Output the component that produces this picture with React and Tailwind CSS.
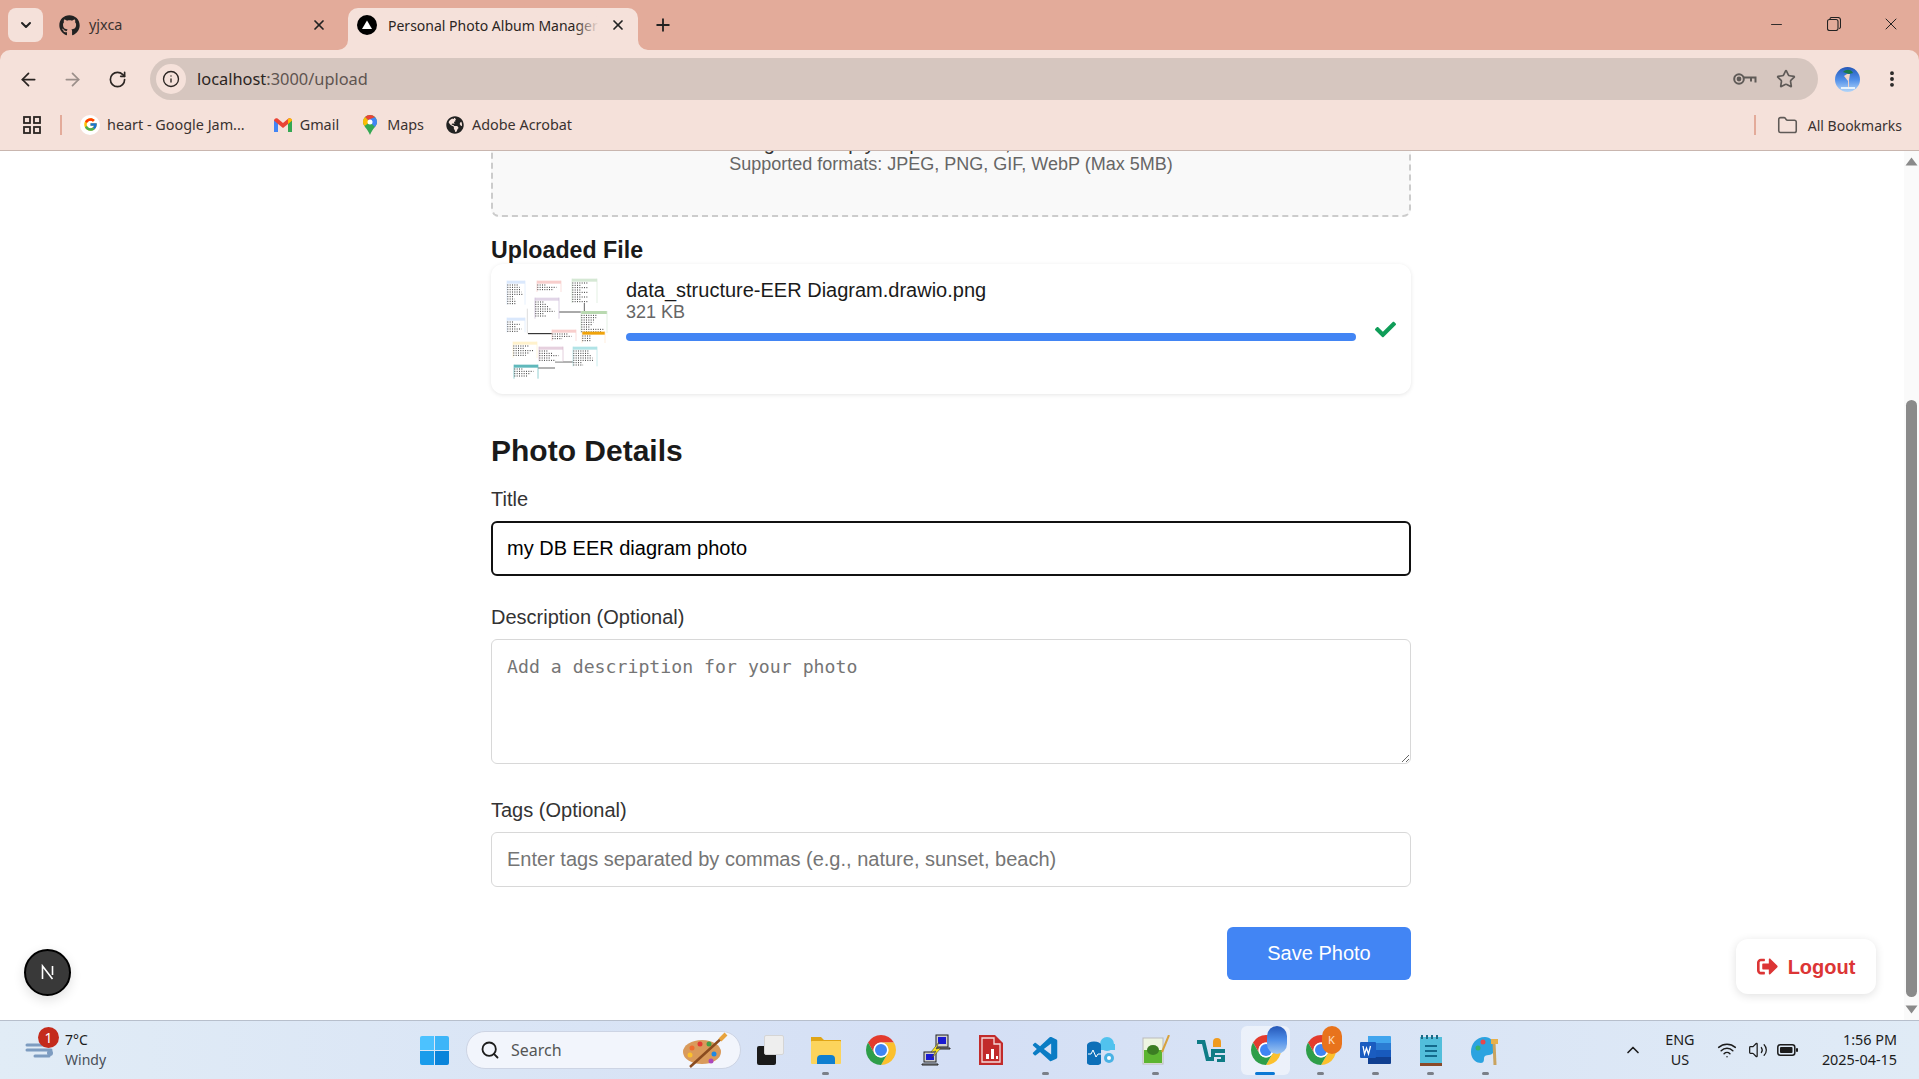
import React from "react";
import { ArrowLeft, ArrowRight, RotateCw, Info, Star, MoreVertical, Folder, X, Plus, Minus, ChevronDown, ChevronUp, Wifi, Volume2, Search } from "lucide-react";
import { FaGithub, FaCheck, FaSignOutAlt, FaGlobeAmericas } from "react-icons/fa";
import { FcGoogle } from "react-icons/fc";
import { VscVscode } from "react-icons/vsc";

const Chrome = ({ size = 30 }) => (
  <svg width={size} height={size} viewBox="4 4 40 40">
    <path d="M6.68 14A20 20 0 0 1 41.32 14H24A10 10 0 0 0 15.34 29Z" fill="#e33b2e" />
    <path d="M41.32 14A20 20 0 0 1 24 44L32.66 29A10 10 0 0 0 24 14Z" fill="#fbc02d" />
    <path d="M24 44A20 20 0 0 1 6.68 14L15.34 29A10 10 0 0 0 32.66 29Z" fill="#2e9e49" />
    <circle cx="24" cy="24" r="10" fill="#fff" />
    <circle cx="24" cy="24" r="8" fill="#3f85f4" />
  </svg>
);

const boxes = [
  [78, 423, 54, 72, "#dae8fc", "#dae8fc"],
  [168, 423, 72, 34, "#f8cecc", "#f8cecc"],
  [273, 417, 75, 73, "#d5e8d4", "#d5e8d4"],
  [162, 474, 72, 63, "#e1d5e7", "#c9b8d6"],
  [300, 514, 78, 66, "#b9d9b0", "#d5e8d4"],
  [78, 534, 54, 44, "#dae8fc", "#dae8fc"],
  [213, 570, 72, 34, "#f8cecc", "#f8cecc"],
  [303, 576, 69, 34, "#f0a30a", "#ffe6cc"],
  [96, 606, 72, 49, "#fff2cc", "#fff2cc"],
  [174, 621, 72, 44, "#e6d0de", "#d6b8cc"],
  [276, 621, 72, 59, "#b0e3e6", "#b0e3e6"],
  [99, 675, 72, 42, "#5fb8bb", "#5fb8bb"],
];

const Thumb = () => (
  <svg width="105" height="105" viewBox="72 412 315 315">
    <path d="M234 517H300" stroke="#555" strokeWidth="3" />
    <path d="M141 582H213" stroke="#111" strokeWidth="3" />
    <path d="M222 667H276M171 685H222M310 490V514" stroke="#666" strokeWidth="3" />
    <path d="M139 507V582" stroke="#ccc" strokeWidth="2" />
    {boxes.map(([x, y, w, h, c, b], i) => {
      const rows = [];
      for (let r = y + 13, k = 0; r < y + h - 2; r += 7, k++) {
        const len = w * (0.35 + (((i + 3) * (k + 5) * 7) % 10) / 18);
        rows.push(<path key={k} d={`M${x + 1} ${r}h${Math.min(len, w - 3)}`} stroke="#000" strokeWidth="2.400" strokeDasharray="3 4" />);
      }
      return (
        <g key={i}>
          <rect x={x} y={y} width={w} height={h} fill="#fff" />
          <rect x={x} y={y} width={w} height="9" fill={c} />
          <path d={`M${x} ${y}V${y + h}M${x + w} ${y}V${y + h}`} stroke={b} strokeWidth="2" />
          {rows}
        </g>
      );
    })}
  </svg>
);

const Bookmark = ({ icon, label, className }) => (
  <div className={"flex items-center gap-[7px] " + className}>
    <span className="flex w-[20px] h-[20px] items-center justify-center">{icon}</span>
    <span className="text-[14.4px] text-[#3a3230] whitespace-nowrap">{label}</span>
  </div>
);

const Slot = ({ children, pill, active }) => (
  <div className="relative flex w-[55px] h-full items-center justify-center">
    {active && <div className="absolute left-[3px] right-[3px] top-[5px] bottom-[4px] rounded-md bg-white/50" />}
    <div className="relative flex items-center justify-center">{children}</div>
    {pill && <div className="absolute left-[24px] bottom-[4px] w-[7px] h-[3px] rounded-full bg-[#7a7f88]" />}
    {active && <div className="absolute left-[17px] bottom-[4px] w-[20px] h-[3px] rounded-full bg-[#0a78d4]" />}
  </div>
);

const inputCls = "block w-full h-[55px] rounded-md bg-white text-[20px] outline-none font-['Liberation_Sans',sans-serif]";

export default function App() {
  return (
    <div className="flex flex-col w-[1919px] h-[1079px] overflow-hidden bg-white font-['Noto_Sans',sans-serif]">
      {/* tab strip */}
      <div className="flex h-[50px] shrink-0 bg-[#e3ab9a] items-end relative">
        <div className="self-start mt-[8px] ml-[8px] flex w-[35px] h-[34px] items-center justify-center rounded-lg bg-[#f5e1da]">
          <ChevronDown size={16} strokeWidth={3} color="#222" />
        </div>
        <div className="flex w-[305px] h-[42px] items-center pl-[16px] pr-[21px] pb-[8px] gap-[9px] text-[14.4px] text-[#3a3230]">
          <FaGithub size={21} color="#222" />
          <span className="flex-1">yjxca</span>
          <X size={16} strokeWidth={2.6} color="#222" />
        </div>
        <div className="relative flex w-[290px] h-[42px] items-center pl-[9px] pr-[12px] pb-[8px] gap-[11px] rounded-t-[10px] bg-[#f5e1da] text-[14px] text-[#2b2522]">
          <svg width="10" height="10" viewBox="0 0 10 10" className="absolute left-[-10px] bottom-0"><path d="M10 0V10H0A10 10 0 0 0 10 0Z" fill="#f5e1da" /></svg>
          <svg width="10" height="10" viewBox="0 0 10 10" className="absolute right-[-10px] bottom-0"><path d="M0 0V10H10A10 10 0 0 1 0 0Z" fill="#f5e1da" /></svg>
          <svg width="20" height="20" viewBox="0 0 20 20" className="shrink-0">
            <circle cx="10" cy="10" r="10" fill="#000" />
            <path d="M10 5.5L15 14H5Z" fill="#fff" />
          </svg>
          <div className="relative w-[212px] overflow-hidden whitespace-nowrap">
            Personal Photo Album Manager
            <div className="absolute right-0 top-0 bottom-0 w-[24px] bg-gradient-to-r from-transparent to-[#f5e1da]" />
          </div>
          <X size={16} strokeWidth={2.6} color="#222" className="shrink-0" />
        </div>
        <div className="flex w-[50px] h-[42px] items-center justify-center pb-[8px]">
          <Plus size={20} strokeWidth={2.2} color="#222" />
        </div>
        <div className="ml-auto self-start flex items-center h-[48px] text-[#222]">
          <Minus size={17} strokeWidth={1.3} className="mr-[42px]" />
          <svg width="14" height="14" viewBox="0 0 14 14" fill="none" stroke="#222" strokeWidth="1.1" className="mr-[40px]">
            <rect x="0.5" y="2.5" width="10.5" height="11" rx="2" />
            <path d="M3 2.5V2a1.5 1.5 0 0 1 1.5-1.5H11A2.5 2.5 0 0 1 13.5 3v7A1.5 1.5 0 0 1 12 11.5" />
          </svg>
          <X size={20} strokeWidth={1.2} className="mr-[18px]" />
        </div>
      </div>
      {/* toolbar */}
      <div className="flex h-[58px] shrink-0 bg-[#e3ab9a]">
        <div className="flex flex-1 rounded-t-[10px] bg-[#f5e1da] pt-[8px] h-[58px]">
          <div className="flex h-[42px] w-full items-center">
            <ArrowLeft size={21} strokeWidth={2} color="#2b2522" className="ml-[18px]" />
            <ArrowRight size={21} strokeWidth={2} color="#9b8f8a" className="ml-[23px]" />
            <RotateCw size={19} strokeWidth={2.1} color="#2b2522" className="ml-[25px]" />
            <div className="flex flex-1 ml-[23px] h-[42px] items-center rounded-full bg-[#d6c6bf] pl-[6px] pr-[22px]">
              <div className="flex w-[30px] h-[30px] items-center justify-center rounded-full bg-[#f5e1da]">
                <Info size={18} strokeWidth={1.8} color="#2b2522" />
              </div>
              <span className="ml-[11px] text-[16.4px] text-[#2b2522]">localhost<span className="text-[#5e5450]">:3000/upload</span></span>
              <svg width="24" height="14" viewBox="0 0 24 14" fill="none" stroke="#5f5a57" strokeWidth="2" className="ml-auto mr-[19px]">
                <circle cx="6" cy="7" r="4.8" />
                <circle cx="6" cy="7" r="1.4" fill="#5f5a57" />
                <path d="M11 5.5H22.5V10.5M18 5.5V9.5" />
              </svg>
              <Star size={20} strokeWidth={2} color="#5f5a57" />
            </div>
            <div className="relative flex w-[25px] h-[25px] ml-[17px] rounded-full overflow-hidden bg-gradient-to-b from-[#2557b8] via-[#4f8ee8] to-[#b5d6f8] justify-center">
              <svg width="25" height="25" viewBox="0 0 25 25">
                <path d="M8 5c3-3 8-3 10 1l-4 1z" fill="#1c7a4a" />
                <path d="M12 7l3 0-1 6 0 7-1 0 0-6-4-5z" fill="#f3d4c6" />
                <path d="M6 20h14v2H6z" fill="#e6f2fd" />
              </svg>
            </div>
            <MoreVertical size={20} strokeWidth={2.6} color="#222" className="ml-[22px] mr-[17px]" />
          </div>
        </div>
      </div>
      {/* bookmarks */}
      <div className="flex h-[43px] shrink-0 items-center pb-[8px] bg-[#f5e1da] border-b border-[#c9b6af]">
        <svg width="18" height="18" viewBox="0 0 18 18" fill="none" stroke="#2b2522" strokeWidth="1.8" className="ml-[23px]">
          <rect x="1" y="1" width="6" height="6" />
          <rect x="11" y="1" width="6" height="6" />
          <rect x="1" y="11" width="6" height="6" />
          <rect x="11" y="11" width="6" height="6" />
        </svg>
        <div className="ml-[19px] w-[2px] h-[20px] bg-[#e3ab9a]" />
        <Bookmark className="ml-[18px]" icon={<span className="flex w-[20px] h-[20px] items-center justify-center rounded-full bg-white"><FcGoogle size={15} /></span>} label="heart - Google Jam..." />
        <Bookmark className="ml-[28px]" icon={
          <svg width="18" height="14" viewBox="0 0 18 14">
            <path d="M0 2.5V14h4V6l5 4 5-4v8h4V2.5C18 .5 15.8-.5 14.4.6L9 5 3.6.6C2.2-.5 0 .5 0 2.5z" fill="#ea4335" />
            <path d="M0 2.5V14h4V6z" fill="#4285f4" />
            <path d="M14 6v8h4V2.5z" fill="#34a853" />
            <path d="M14 .9V6l4-3.5C18 .5 15.5-.3 14 .9z" fill="#fbbc04" />
          </svg>
        } label="Gmail" />
        <Bookmark className="ml-[21px]" icon={
          <svg width="14" height="20" viewBox="0 0 14 20">
            <path d="M7 0a7 7 0 0 1 7 7c0 4-4 6-7 13C4 13 0 11 0 7a7 7 0 0 1 7-7z" fill="#34a853" />
            <path d="M2 2L12 12c1-1.500 2-3 2-5 0-1.500-.5-3-1.500-4.500z" fill="#4285f4" />
            <path d="M7 0a7 7 0 0 0-5 2l3 3 7-3A7 7 0 0 0 7 0z" fill="#ea4335" />
            <path d="M2 2C.7 3.500 0 5 0 7c0 1.500.6 2.800 1.500 4L7 7z" fill="#fbbc04" />
            <circle cx="7" cy="7" r="2.500" fill="#fff" />
          </svg>
        } label="Maps" />
        <Bookmark className="ml-[21px]" icon={<FaGlobeAmericas size={18} color="#222" />} label="Adobe Acrobat" />
        <div className="ml-auto w-[2px] h-[20px] bg-[#e3ab9a]" />
        <Folder size={21} strokeWidth={1.8} color="#5f5a57" className="ml-[21px]" />
        <span className="ml-[10px] mr-[17px] text-[14px] text-[#3a3230] whitespace-nowrap">All Bookmarks</span>
      </div>
      {/* page */}
      <div className="relative flex flex-1 min-h-0 overflow-hidden font-['Liberation_Sans',sans-serif]">
        <div className="flex-1 min-w-0 overflow-hidden pr-[2px]">
          <div className="mx-auto flex w-[920px] flex-col mt-[-40px] text-[#1a1a1a]">
            <div className="flex h-[106px] flex-col items-center rounded-lg border-2 border-dashed border-[#cccccc] bg-[#f9f9f9] pt-[18px]">
              <div className="h-[24px] text-[20px] leading-[24px] text-[#333]">Drag and drop your photo here, or click to browse</div>
              <div className="h-[24px] -mt-[3px] text-[18px] leading-[24px] text-[#666]">Supported formats: JPEG, PNG, GIF, WebP (Max 5MB)</div>
            </div>
            <h3 className="mt-[20px] h-[26px] text-[23.2px] leading-[26px] font-bold text-[#1a1a1a]">Uploaded File</h3>
            <div className="mt-px flex h-[130px] items-center rounded-xl bg-white pl-[14px] pr-[14px] shadow-[0_1px_4px_rgba(0,0,0,0.1)]">
              <div className="w-[105px] h-[105px] shrink-0"><Thumb /></div>
              <div className="ml-[16px] flex-1 min-w-0 self-start pt-[14px]">
                <div className="text-[20px] leading-[24px] text-[#1a1a1a]">data_structure-EER Diagram.drawio.png</div>
                <div className="text-[18px] leading-[20px] text-[#666]">321 KB</div>
                <div className="mt-[11px] h-[8px] rounded-full bg-[#4285f4]" />
              </div>
              <FaCheck size={21} color="#0f9d58" className="ml-[19px] mr-[1px] shrink-0" />
            </div>
            <h2 className="mt-[38px] h-[38px] text-[30px] leading-[38px] font-bold text-[#1a1a1a]">Photo Details</h2>
            <label className="mt-[17px] h-[24px] text-[20px] leading-[24px] text-[#333]">Title</label>
            <input readOnly value="my DB EER diagram photo" className={"mt-[10px] border-2 border-[#111] px-[14px] text-black " + inputCls} />
            <label className="mt-[29px] h-[24px] text-[20px] leading-[24px] text-[#333]">Description (Optional)</label>
            <textarea readOnly placeholder="Add a description for your photo" className="mt-[10px] block w-full h-[125px] rounded-md border border-[#d8d8d8] bg-white px-[15px] pt-[16px] text-[18.2px] leading-[22px] outline-none placeholder:text-[#757575] font-['DejaVu_Sans_Mono',monospace]" />
            <label className="mt-[34px] h-[24px] text-[20px] leading-[24px] text-[#333]">Tags (Optional)</label>
            <input readOnly placeholder="Enter tags separated by commas (e.g., nature, sunset, beach)" className={"mt-[10px] border border-[#d8d8d8] px-[15px] placeholder:text-[#757575] " + inputCls} />
            <button className="mt-[40px] self-end w-[184px] h-[53px] rounded-md bg-[#4285f4] pb-[2px] text-[20px] text-white">Save Photo</button>
          </div>
        </div>
        {/* scrollbar */}
        <div className="flex w-[15px] shrink-0 flex-col items-center bg-[#fafafa] py-[6px]">
          <svg width="13" height="9" viewBox="0 0 13 9"><path d="M6.500 0.500L12.500 8.500H0.500Z" fill="#8a8a8a" /></svg>
          <div className="mt-[234px] w-[11px] flex-1 rounded-full bg-[#8a8a8a]" />
          <svg width="13" height="9" viewBox="0 0 13 9" className="mt-[8px]"><path d="M6.500 8.500L12.500 0.500H0.500Z" fill="#8a8a8a" /></svg>
        </div>
        {/* overlays */}
        <div className="absolute left-[24px] bottom-[24px] flex w-[47px] h-[47px] items-center justify-center rounded-full border-2 border-black bg-[#393939] shadow-[0_4px_12px_rgba(0,0,0,0.12)]">
          <svg width="17" height="17" viewBox="0 0 17 17" fill="none" stroke="#fff" strokeWidth="1.6"><path d="M3.500 15V2L13.500 15M13.500 2V11" /></svg>
        </div>
        <button className="absolute right-[43px] bottom-[26px] flex w-[140px] h-[55px] items-center justify-center gap-[10px] rounded-xl bg-white text-[20px] font-bold text-[#dc3535] shadow-[0_2px_10px_rgba(0,0,0,0.12)]">
          <FaSignOutAlt size={21} /> Logout
        </button>
      </div>
      {/* taskbar */}
      <div className="flex h-[59px] shrink-0 items-center border-t border-[#b7bfcc] bg-gradient-to-r from-[#e1ecf6] via-[#d4dff5] to-[#e0ebf6] font-['Noto_Sans',sans-serif]">
        <div className="relative flex w-[420px] h-full shrink-0 items-center pl-[25px]">
          <svg width="30" height="30" viewBox="0 0 30 30" fill="none" stroke="#7d9cc0" strokeWidth="3" strokeLinecap="round">
            <path d="M2 10H20M2 15H26M10 21H24" />
            <circle cx="25" cy="18" r="3" fill="#7d9cc0" stroke="none" />
          </svg>
          <div className="absolute left-[38px] top-[6px] flex w-[21px] h-[21px] items-center justify-center rounded-full bg-[#c42b1c] text-[14px] leading-none text-white">1</div>
          <div className="ml-[10px] text-[14px] leading-[20px]">
            <div className="text-[#1c1c1c]">7°C</div>
            <div className="text-[#4a4f58]">Windy</div>
          </div>
        </div>
        <div className="grid grid-cols-2 gap-[1px] w-[29px] h-[29px] shrink-0">
          <div className="bg-[#4cc2ff] rounded-tl-[2px]" />
          <div className="bg-[#3db5f8] rounded-tr-[2px]" />
          <div className="bg-[#1a9ceb] rounded-bl-[2px]" />
          <div className="bg-[#0a84da] rounded-br-[2px]" />
        </div>
        <div className="ml-[17px] flex w-[275px] h-[38px] shrink-0 items-center rounded-full bg-[#f2f5fc] border border-[#cdd4e4] pl-[13px] pr-[10px]">
          <Search size={20} strokeWidth={2.2} color="#1c1c1c" />
          <span className="ml-[11px] text-[16px] text-[#555]">Search</span>
          <svg width="50" height="36" viewBox="0 0 46 36" className="ml-auto">
            <ellipse cx="20" cy="20" rx="19" ry="12" fill="#d99a5b" />
            <circle cx="10" cy="16" r="2.500" fill="#ef6c2f" />
            <circle cx="18" cy="12" r="2.500" fill="#e53935" />
            <circle cx="27" cy="12" r="2.500" fill="#43a047" />
            <circle cx="8" cy="23" r="2.500" fill="#fbc02d" />
            <circle cx="32" cy="22" r="2.500" fill="#1e88e5" />
            <circle cx="29" cy="29" r="2.500" fill="#ab47bc" />
            <path d="M8 35L42 4" stroke="#8a4b1f" strokeWidth="2.500" />
            <path d="M38 8L44 2" stroke="#e8a33d" strokeWidth="4" />
          </svg>
        </div>
        <div className="ml-[2px] flex h-full shrink-0">
          <Slot>
            <div className="relative w-[28px] h-[30px]">
              <div className="absolute left-0 bottom-0 w-[19px] h-[19px] rounded-[2px] bg-[#1a1a1a]" />
              <div className="absolute right-[1px] top-0 w-[20px] h-[20px] rounded-[2px] bg-[#eeeeee] border border-[#d5d5d5]" />
            </div>
          </Slot>
          <Slot pill>
            <svg width="30" height="30" viewBox="0 0 30 30">
              <path d="M0 2h10l3 3h17v7H0z" fill="#e0a516" />
              <rect y="6" width="30" height="23" rx="1" fill="#fcd45c" />
              <path d="M6 29v-5q0-4 4-4h10q4 0 4 4v5z" fill="#0f7fd0" />
            </svg>
          </Slot>
          <Slot><Chrome /></Slot>
          <Slot>
            <svg width="30" height="32" viewBox="0 0 30 32">
              <rect x="15" y="1" width="12" height="12" fill="#cfcfcf" stroke="#222" />
              <rect x="17" y="3" width="8" height="7" fill="#1a1ad0" />
              <rect x="3" y="18" width="12" height="10" fill="#cfcfcf" stroke="#222" />
              <rect x="5" y="20" width="8" height="6" fill="#1a1ad0" />
              <path d="M1 30h16v1H1zM14 14h15v1H14z" stroke="#222" fill="#ddd" />
              <path d="M18 8L10 18l5-1-4 7 9-10-5 1z" fill="#ffe81a" stroke="#333" strokeWidth=".5" />
            </svg>
          </Slot>
          <Slot>
            <svg width="24" height="30" viewBox="0 0 24 30">
              <path d="M0 0H16L24 8V30H0z" fill="#c22b2b" />
              <path d="M3 3H15V9H21V27H3z" fill="#c22b2b" stroke="#f4dcdc" strokeWidth="1.300" />
              <path d="M7 24v-5h3v5zM12 24v-10h3v10zM17 24v-3h2v3z" fill="#fff" />
            </svg>
          </Slot>
          <Slot pill><VscVscode size={30} color="#0a7cc4" /></Slot>
          <Slot>
            <svg width="30" height="30" viewBox="0 0 30 30">
              <circle cx="21" cy="9" r="7" fill="#51c2ee" />
              <rect x="14" y="9" width="15" height="6" fill="#51c2ee" />
              <path d="M1 10a6 3 0 0 1 14 0V28a6 2 0 0 1-14 0z" fill="#0d6fb8" />
              <path d="M2 19h3l2-4 3 7 2-3h3" stroke="#fff" fill="none" strokeWidth="1" />
              <circle cx="23" cy="23" r="5" fill="#4ab2e4" />
              <circle cx="23" cy="23" r="2" fill="#fff" />
            </svg>
          </Slot>
          <Slot pill>
            <svg width="28" height="30" viewBox="0 0 28 30">
              <rect x="1" y="3" width="20" height="26" fill="#eef5e2" stroke="#bbb" />
              <rect x="2" y="15" width="18" height="13" fill="#5cb531" />
              <ellipse cx="11" cy="15" rx="6" ry="5" fill="#3b7d23" />
              <path d="M27 0L20 17" stroke="#d8a23c" strokeWidth="2" />
            </svg>
          </Slot>
          <Slot>
            <svg width="30" height="28" viewBox="0 0 30 28">
              <path d="M1 4H9L13 21H18V25H10L6 8H1z" fill="#0e7c86" />
              <path d="M17 6a4 4 0 0 1 8 0V11H17z" fill="#f09b1e" />
              <path d="M15 13H29V17H19V19H29V26H21V23H25V21H15z" fill="#0e7c86" />
            </svg>
          </Slot>
          <Slot active>
            <div className="relative">
              <Chrome />
              <div className="absolute right-[-6px] top-[-9px] w-[20px] h-[28px] rounded-full bg-gradient-to-b from-[#2557b8] via-[#4f8ee8] to-[#9fc6f0]" />
            </div>
          </Slot>
          <Slot pill>
            <div className="relative">
              <Chrome />
              <div className="absolute right-[-6px] top-[-9px] flex w-[20px] h-[28px] items-center justify-center rounded-full bg-[#e8731c] text-[11px] text-[#ffe0c4]">K</div>
            </div>
          </Slot>
          <Slot pill>
            <svg width="32" height="30" viewBox="0 0 32 30">
              <path d="M8 1H30a1 1 0 0 1 1 1V8H8z" fill="#41a5ee" />
              <rect x="8" y="8" width="23" height="7" fill="#2b7cd3" />
              <rect x="8" y="15" width="23" height="7" fill="#185abd" />
              <path d="M8 22H31V28a1 1 0 0 1-1 1H8z" fill="#103f91" />
              <rect x="0" y="7" width="16" height="16" rx="1" fill="#1a5cc0" />
              <path d="M3 11l1.500 8 2-6 2 6 2-8" stroke="#fff" fill="none" strokeWidth="1.300" />
            </svg>
          </Slot>
          <Slot pill>
            <svg width="24" height="31" viewBox="0 0 24 31">
              <rect x="1" y="2" width="22" height="27" fill="#52bedb" />
              <rect x="1" y="28" width="22" height="3" fill="#8a4a2a" />
              <path d="M3 0v4M8 0v4M13 0v4M18 0v4" stroke="#1c6a86" strokeWidth="2" />
              <path d="M6 11H18M6 16H18M6 21H18" stroke="#136a8c" strokeWidth="2" />
            </svg>
          </Slot>
          <Slot pill>
            <svg width="32" height="32" viewBox="0 0 32 32">
              <path d="M15 3C6 3 1 10 1 18s6 11 10 11c3 0 3-3 3-5s2-3 5-3 6-3 6-8-5-10-10-10z" fill="#2ba3e0" />
              <circle cx="8" cy="14" r="2.500" fill="#36b36a" />
              <circle cx="13" cy="8" r="2.500" fill="#e5484d" />
              <path d="M24 8L25 31" stroke="#c9a35f" strokeWidth="3" />
              <path d="M21 5h7v5h-7z" fill="#e8b04a" />
            </svg>
          </Slot>
        </div>
        <div className="ml-auto flex h-full items-center pr-[22px] text-[#1c1c1c]">
          <ChevronUp size={20} strokeWidth={2} />
          <div className="ml-[16px] w-[42px] text-center text-[14.4px] leading-[20px]">
            <div>ENG</div>
            <div>US</div>
          </div>
          <Wifi size={20} strokeWidth={1.8} className="ml-[16px]" />
          <Volume2 size={20} strokeWidth={1.5} className="ml-[11px]" />
          <svg width="21" height="12" viewBox="0 0 21 12" className="ml-[9px]">
            <rect x="0.800" y="0.800" width="17" height="10.400" rx="2.500" fill="none" stroke="#1c1c1c" strokeWidth="1.500" />
            <rect x="3" y="3" width="12.500" height="6" rx="1" fill="#1c1c1c" />
            <rect x="19" y="4" width="2" height="4" rx="1" fill="#1c1c1c" />
          </svg>
          <div className="ml-[24px] text-right text-[14.4px] leading-[20px]">
            <div>1:56 PM</div>
            <div>2025-04-15</div>
          </div>
        </div>
      </div>
    </div>
  );
}
